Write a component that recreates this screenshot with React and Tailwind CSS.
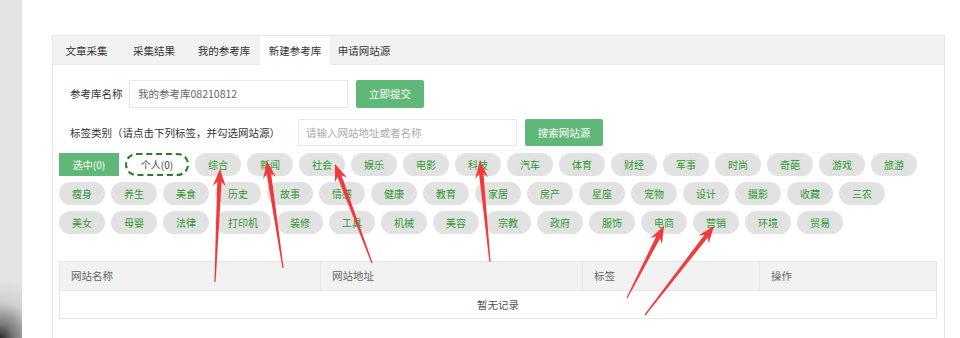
import React from 'react';

const tabs = [
  { name: '文章采集', w: 'w-[67px]' },
  { name: '采集结果', w: 'w-[68px]' },
  { name: '我的参考库', w: 'w-[72px]' },
  { name: '新建参考库', w: 'w-[70px]', active: true },
  { name: '申请网站源', w: 'w-[68px]' },
];

const row1 = ['综合', '新闻', '社会', '娱乐', '电影', '科技', '汽车', '体育', '财经', '军事', '时尚', '奇葩', '游戏', '旅游'];
const row2 = ['瘦身', '养生', '美食', '历史', '故事', '情感', '健康', '教育', '家居', '房产', '星座', '宠物', '设计', '摄影', '收藏', '三农'];
const row3 = ['美女', '母婴', '法律', '打印机', '装修', '工具', '机械', '美容', '宗教', '政府', '服饰', '电商', '营销', '环境', '贸易'];

// tail -> tip
const arrows = [
  [215, 282, 220, 169],
  [283, 268, 267, 161],
  [372, 263, 335, 164],
  [490, 262, 480, 161],
  [627, 298, 664, 226],
  [645, 315, 714, 226],
];

function arrowPoints([x1, y1, x2, y2]) {
  const dx = x2 - x1;
  const dy = y2 - y1;
  const len = Math.hypot(dx, dy);
  const ux = dx / len;
  const uy = dy / len;
  const nx = -uy;
  const ny = ux;
  const p = (along, side) => [x2 - ux * along + nx * side, y2 - uy * along + ny * side];
  const pts = [
    [x1 + nx * 0.6, y1 + ny * 0.6],
    p(13, 2.2),
    p(17, 6.5),
    [x2, y2],
    p(17, -6.5),
    p(13, -2.2),
    [x1 - nx * 0.6, y1 - ny * 0.6],
  ];
  return pts.map((q) => q[0].toFixed(1) + ',' + q[1].toFixed(1)).join(' ');
}

function Tag({ label }) {
  return (
    <span className="h-[23px] px-[13px] rounded-full bg-[#e2e2e2] text-[#2f9a2f] text-[10px] flex items-center shrink-0">
      {label}
    </span>
  );
}

export default function App() {
  return (
    <div className="relative w-[960px] h-[338px] overflow-hidden bg-white flex font-['Noto_Sans_CJK_SC',sans-serif]">
      <div className="w-[22px] h-full shrink-0 bg-[radial-gradient(circle_at_0%_100%,#2a2a2a_0px,#7a7a7a_14px,#d0d0d0_36px,#e4e4e4_60px)]" />

      <div className="pl-[30px] pt-[35px]">
        <div className="w-[893px] h-[320px] border border-[#e6e6e6] bg-white">
          {/* tabs */}
          <div className="h-[29px] bg-[#f2f2f2] border-b border-[#e6e6e6] flex">
            {tabs.map((t) => (
              <div
                key={t.name}
                className={`${t.w} h-[29px] flex items-center justify-center text-[10.5px] text-[#333] ${t.active ? 'bg-white' : ''}`}
              >
                {t.name}
              </div>
            ))}
          </div>

          <div className="pl-[6px] pr-[7px]">
            <div className="flex items-center pl-[11px] pt-[15px]">
              <span className="text-[10.5px] text-[#333] w-[59px]">参考库名称</span>
              <div className="w-[219px] h-[28px] border border-[#e6e6e6] flex items-center pl-[8px] text-[10.5px] text-[#666]">
                我的参考库08210812
              </div>
              <button className="ml-[8px] w-[68px] h-[28px] bg-[#5fb878] text-white text-[10.5px] rounded-[2px]">
                立即提交
              </button>
            </div>

            <div className="flex items-center pl-[11px] pt-[11px]">
              <span className="text-[10.5px] text-[#333] w-[228px]">标签类别（请点击下列标签，并勾选网站源）</span>
              <div className="w-[219px] h-[27px] border border-[#e6e6e6] flex items-center pl-[7px] text-[10.5px] text-[#aaa]">
                请输入网站地址或者名称
              </div>
              <button className="ml-[8px] w-[78px] h-[27px] bg-[#5fb878] text-white text-[10.5px] rounded-[2px]">
                搜索网站源
              </button>
            </div>

            <div className="pt-[7px] flex flex-col gap-[6px]">
              <div className="flex gap-[6px]">
                <span className="w-[60px] h-[23px] bg-[#5fb878] text-white text-[10px] flex items-center justify-center shrink-0">
                  选中(0)
                </span>
                <span className="w-[64px] h-[23px] rounded-full border-2 border-dashed border-[#2b7d2b] text-[#3d4a3d] text-[10px] flex items-center justify-center shrink-0">
                  个人(0)
                </span>
                {row1.map((t) => (
                  <Tag key={t} label={t} />
                ))}
              </div>
              <div className="flex gap-[6px]">
                {row2.map((t) => (
                  <Tag key={t} label={t} />
                ))}
              </div>
              <div className="flex gap-[6px]">
                {row3.map((t) => (
                  <Tag key={t} label={t} />
                ))}
              </div>
            </div>

            <div className="mt-[27px] w-[878px] border border-[#e6e6e6]">
              <div className="flex h-[29px] bg-[#f2f2f2] border-b border-[#e6e6e6] text-[10.5px] text-[#666]">
                <div className="w-[261px] pl-[11px] flex items-center border-r border-[#e6e6e6]">网站名称</div>
                <div className="w-[262px] pl-[11px] flex items-center border-r border-[#e6e6e6]">网站地址</div>
                <div className="w-[177px] pl-[11px] flex items-center border-r border-[#e6e6e6]">标签</div>
                <div className="flex-1 pl-[11px] flex items-center">操作</div>
              </div>
              <div className="h-[27px] flex items-center justify-center text-[10.5px] text-[#555]">暂无记录</div>
            </div>
          </div>
        </div>
      </div>

      <svg className="absolute inset-0 pointer-events-none" width="960" height="338">
        {arrows.map((a, i) => (
          <polygon key={i} points={arrowPoints(a)} fill="#f23a3a" />
        ))}
      </svg>
    </div>
  );
}
